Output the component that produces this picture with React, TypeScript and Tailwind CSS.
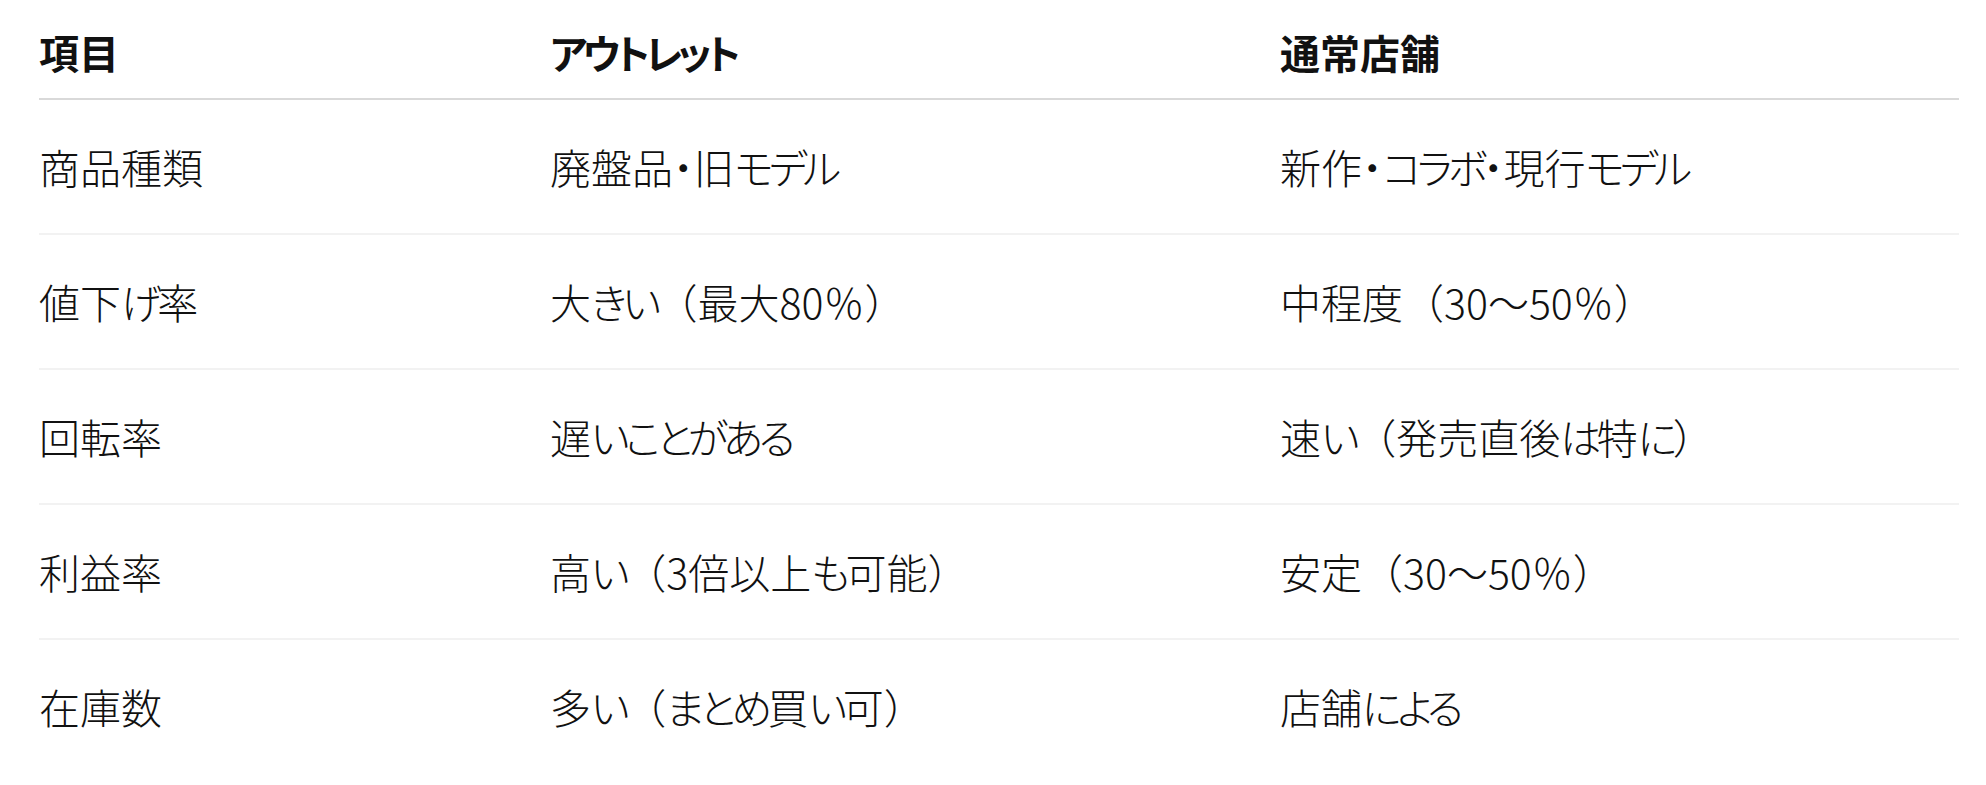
import React from 'react'

const rows: [string, string, string][] = [
  ['商品種類', '廃盤品・旧モデル', '新作・コラボ・現行モデル'],
  ['値下げ率', '大きい（最大80％）', '中程度（30〜50％）'],
  ['回転率', '遅いことがある', '速い（発売直後は特に）'],
  ['利益率', '高い（3倍以上も可能）', '安定（30〜50％）'],
  ['在庫数', '多い（まとめ買い可）', '店舗による'],
]

const font = { fontFamily: '"Noto Sans CJK JP", "Noto Sans", sans-serif' }

// kana and the middle dot are set proportional and a bit tighter, brackets stay full width
function Cell({ text }: { text: string }) {
  const parts = text.split(/([（）％〜]|[\u3041-\u30fa\u30fc]+)/).filter(Boolean)
  return (
    <>
      {parts.map((p, i) => {
        if (/^[（）％〜]$/.test(p)) {
          return (
            <span key={i} className="[font-feature-settings:normal]">
              {p}
            </span>
          )
        }
        if (/^[\u3041-\u30fa\u30fc]+$/.test(p)) {
          return (
            <span key={i} className="tracking-[-4.5px] [font-feature-settings:'palt']">
              {p}
            </span>
          )
        }
        return (
          <span key={i} className="[font-feature-settings:'palt']">
            {p}
          </span>
        )
      })}
    </>
  )
}

export default function App() {
  return (
    <div className="min-h-[785px] bg-white text-[#111]" style={font}>
      <div className="ml-[39px] w-[1920px]">
        {/* header */}
        <div className="grid grid-cols-[511px_730px_1fr] border-b-2 border-[#d9d9d9] pt-[6px]">
          {['項目', 'アウトレット', '通常店舗'].map((h) => (
            <div key={h} className="flex h-[92px] items-center text-[40px] font-bold leading-none">
              <Cell text={h} />
            </div>
          ))}
        </div>

        {/* body */}
        {rows.map((r, i) => (
          <div
            key={r[0]}
            className={
              i < rows.length - 1
                ? 'grid grid-cols-[511px_730px_1fr] border-b-2 border-[#f2f2f2]'
                : 'grid grid-cols-[511px_730px_1fr]'
            }
          >
            {r.map((c, j) => (
              <div key={j} className="flex h-[133px] items-center text-[41px] font-light leading-none">
                <Cell text={c} />
              </div>
            ))}
          </div>
        ))}
      </div>
    </div>
  )
}
